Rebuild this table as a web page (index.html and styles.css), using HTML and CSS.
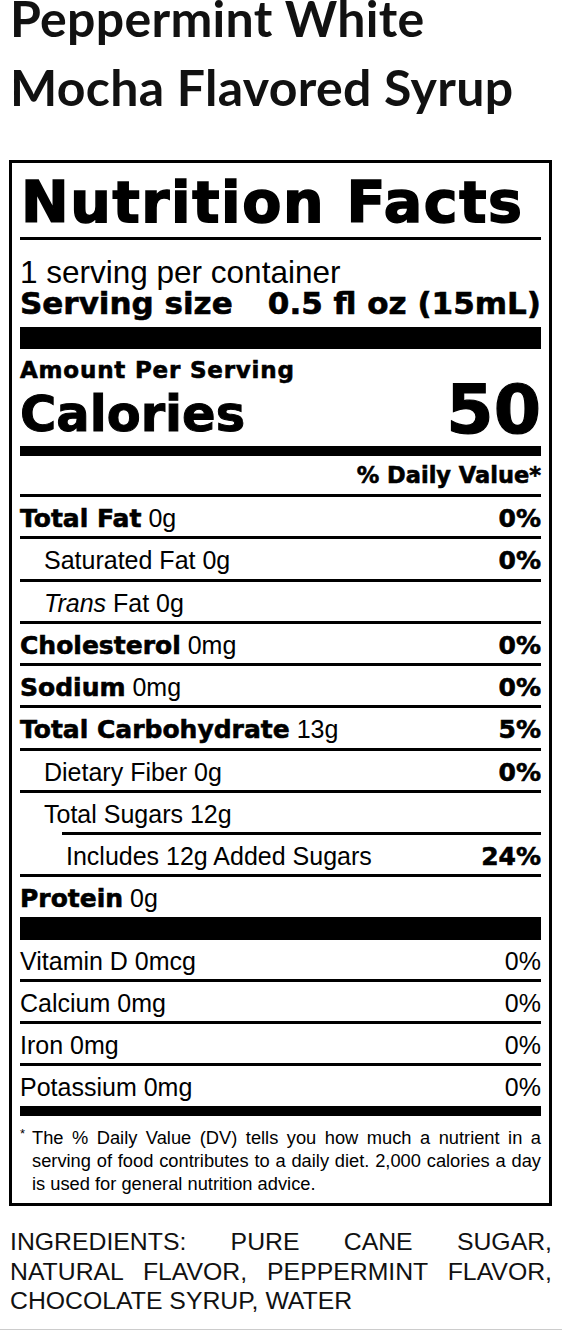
FILE: index.html
```html
<!DOCTYPE html>
<html lang="en">
<head>
    <meta charset="UTF-8">
    <meta name="viewport" content="width=device-width, initial-scale=1.0">
    <title>Peppermint White Mocha Flavored Syrup - Nutrition Facts</title>
    <link rel="stylesheet" href="styles.css">
</head>
<body>

    <div class="page">
        <h1 class="product-title">Peppermint White Mocha Flavored Syrup</h1>

        <!-- Tabela nutricional -->
        <section class="label">
            <h2 class="label-title">Nutrition Facts</h2>
            <div class="servings">1 serving per container</div>
            <div class="serving-size">
                <span>Serving size</span>
                <span>0.5 fl oz (15mL)</span>
            </div>

            <div class="calories">
                <div>
                    <div class="amount">Amount Per Serving</div>
                    <div class="calories-label">Calories</div>
                </div>
                <div class="calories-value">50</div>
            </div>

            <div class="dv-head">% Daily Value*</div>

            <div class="row"><span><b>Total Fat</b> 0g</span><b>0%</b></div>
            <div class="row indent"><span>Saturated Fat 0g</span><b>0%</b></div>
            <div class="row indent"><span><i>Trans</i> Fat 0g</span></div>
            <div class="row"><span><b>Cholesterol</b> 0mg</span><b>0%</b></div>
            <div class="row"><span><b>Sodium</b> 0mg</span><b>0%</b></div>
            <div class="row"><span><b>Total Carbohydrate</b> 13g</span><b>5%</b></div>
            <div class="row indent"><span>Dietary Fiber 0g</span><b>0%</b></div>
            <div class="row indent sub-rule"><span>Total Sugars 12g</span></div>
            <div class="row indent-2"><span>Includes 12g Added Sugars</span><b>24%</b></div>
            <div class="row thick"><span><b>Protein</b> 0g</span></div>

            <div class="row"><span>Vitamin D 0mcg</span><span>0%</span></div>
            <div class="row"><span>Calcium 0mg</span><span>0%</span></div>
            <div class="row"><span>Iron 0mg</span><span>0%</span></div>
            <div class="row medium"><span>Potassium 0mg</span><span>0%</span></div>

            <div class="footnote">
                <span class="star">*</span>
                <p>The % Daily Value (DV) tells you how much a nutrient in a serving of food contributes to a daily diet. 2,000 calories a day is used for general nutrition advice.</p>
            </div>
        </section>

        <p class="ingredients">INGREDIENTS: PURE CANE SUGAR, NATURAL FLAVOR, PEPPERMINT FLAVOR, CHOCOLATE SYRUP, WATER</p>
    </div>
    <div class="page-rule"></div>

</body>
</html>
```

FILE: styles.css
```css
* {
    box-sizing: border-box;
}
body {
    margin: 0;
    font-family: "Liberation Sans", Arial, sans-serif;
    color: #000;
    background: #fff;
}
.page {
    padding: 0 10px 0 9px;
}
.product-title {
    font-family: Lato, "Open Sans", sans-serif;
    font-weight: bold;
    font-size: 50px;
    letter-spacing: 0.3px;
    line-height: 69px;
    color: #111;
    margin: -16px 0 38px 1px;
}

/* Tabela */
.label {
    border: 3px solid #000;
    padding: 0 8px 8.5px;
}
.label-title,
.serving-size,
.amount,
.calories-label,
.calories-value,
.dv-head,
.row b {
    font-family: "DejaVu Sans", sans-serif;
    font-weight: bold;
    -webkit-text-stroke: 0.6px #000;
}
.label-title {
    font-size: 57px;
    letter-spacing: 1.6px;
    line-height: 60px;
    margin: 0;
    padding: 9px 0 5px 1px;
    border-bottom: 3px solid #000;
    -webkit-text-stroke: 1.6px #000;
}
.servings {
    font-size: 31.5px;
    line-height: 30px;
    margin-top: 17px;
}
.serving-size {
    display: flex;
    justify-content: space-between;
    font-size: 31px;
    line-height: 28px;
    padding-top: 2px;
    padding-bottom: 10px;
    border-bottom: 22px solid #000;
}
.calories {
    display: flex;
    justify-content: space-between;
    align-items: flex-end;
    padding-top: 8px;
    border-bottom: 10px solid #000;
}
.amount {
    font-size: 23px;
    letter-spacing: 0.8px;
    line-height: 26px;
}
.calories-label {
    font-size: 49.5px;
    line-height: 63px;
    -webkit-text-stroke: 1px #000;
}
.calories-value {
    font-size: 68px;
    line-height: 73px;
    -webkit-text-stroke: 1.2px #000;
}
.dv-head {
    font-size: 22.5px;
    line-height: 26px;
    text-align: right;
    padding: 6px 0;
    border-bottom: 3px solid #000;
}
.row {
    display: flex;
    justify-content: space-between;
    align-items: baseline;
    height: 42.25px;
    padding-top: 8px;
    font-size: 25px;
    line-height: 27px;
    border-bottom: 3px solid #000;
}
.row b {
    font-size: 25px;
}
.indent {
    padding-left: 24px;
}
.indent-2 {
    padding-left: 46px;
}
.sub-rule {
    border-bottom-color: transparent;
    background: linear-gradient(#000, #000) no-repeat right bottom / calc(100% - 42px) 3px;
    background-origin: border-box;
}
.thick {
    height: 62.25px;
    border-bottom-width: 23px;
}
.medium {
    height: 49.25px;
    border-bottom-width: 10px;
}
.footnote {
    display: flex;
    padding-top: 10px;
    font-size: 18.3px;
    line-height: 23px;
}
.footnote .star {
    flex: none;
    width: 12px;
    font-size: 13px;
    line-height: 16px;
}
.footnote p {
    margin: 0;
    text-align: justify;
}

.ingredients {
    font-size: 24.8px;
    line-height: 29.5px;
    text-align: justify;
    color: #111;
    margin: 21px 0 13px 1px;
}
.page-rule {
    height: 1px;
    background: #ccc;
}
```
